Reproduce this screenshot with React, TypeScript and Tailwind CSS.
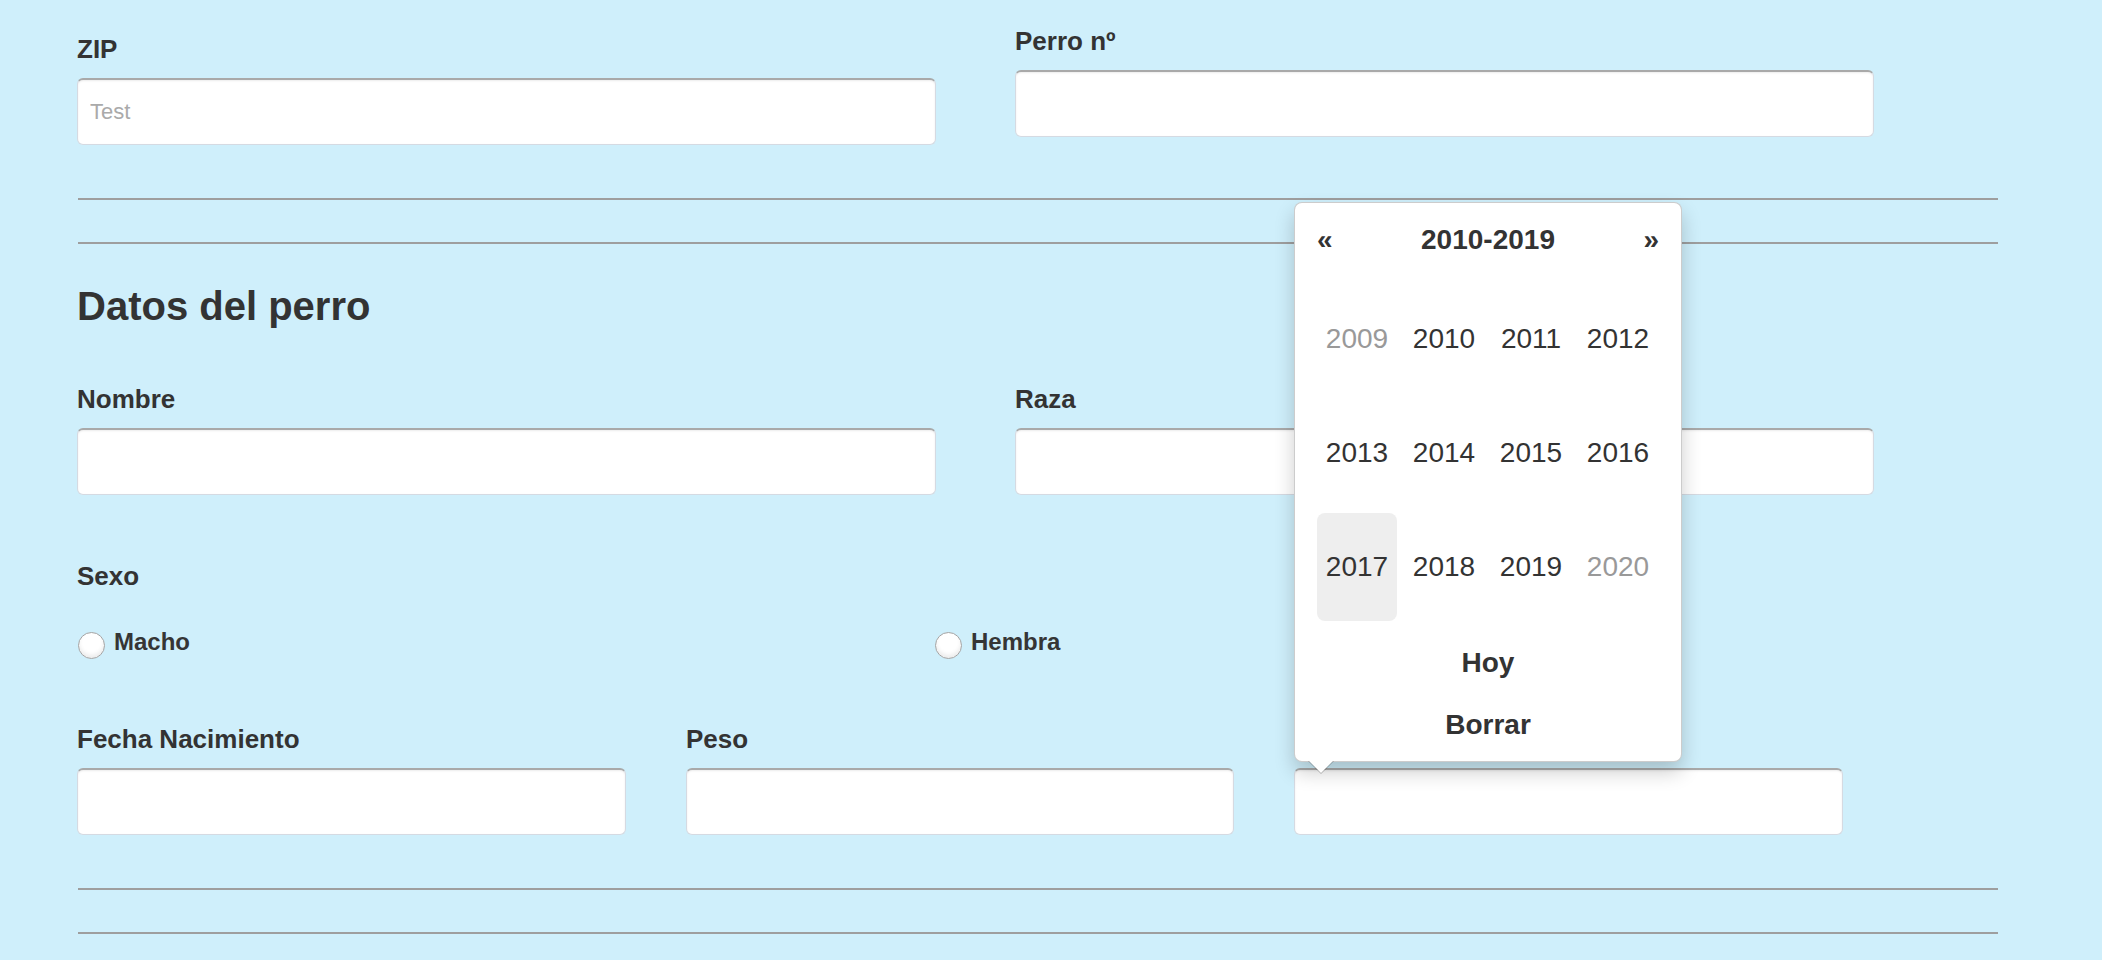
import React from "react";

const font = { fontFamily: '"Liberation Sans", Arial, Helvetica, sans-serif' };

function Label({ children }: { children: React.ReactNode }) {
  return <label className="block text-[26px] leading-[30px] font-bold text-[#333] mb-[14px]">{children}</label>;
}

function TextInput({ placeholder }: { placeholder?: string }) {
  return (
    <input
      type="text"
      placeholder={placeholder}
      className="block w-full h-[67px] box-border bg-white rounded-[6px] border border-[#d5dae2] border-t-2 border-t-[#a9a9a9] shadow-[inset_0_1px_2px_rgba(0,0,0,0.08)] px-[12px] text-[22px] text-[#555] placeholder:text-[#aaa] outline-none"
    />
  );
}

function Divider({ className }: { className: string }) {
  return <div className={`w-[1920px] h-[2px] bg-[#9e9e9e] ml-[1px] ${className}`} />;
}

function Radio({ label, name }: { label: string; name: string }) {
  return (
    <label className="flex items-start gap-[9px]">
      <input
        type="radio"
        name={name}
        className="appearance-none mt-[4px] ml-[1px] w-[27px] h-[27px] rounded-full border border-[#a3a3a3] bg-white shadow-[inset_0_-3px_4px_rgba(0,0,0,0.08)]"
      />
      <span className="text-[24px] leading-[28px] font-bold text-[#353535]">{label}</span>
    </label>
  );
}

const years = [
  { y: 2009, muted: true },
  { y: 2010 },
  { y: 2011 },
  { y: 2012 },
  { y: 2013 },
  { y: 2014 },
  { y: 2015 },
  { y: 2016 },
  { y: 2017, active: true },
  { y: 2018 },
  { y: 2019 },
  { y: 2020, muted: true },
];

function DecadePicker() {
  return (
    <div className="absolute left-0 bottom-[73px] z-10 w-[388px] box-border bg-white border border-[rgba(0,0,0,0.2)] rounded-[8px] shadow-[0_10px_20px_rgba(0,0,0,0.2)] px-[22px] pt-[17px] pb-[5px] text-[#333]">
      <div className="flex items-center h-[40px] text-[28px] leading-[40px] font-bold">
        <span className="w-[20px]">«</span>
        <span className="flex-1 text-center">2010-2019</span>
        <span className="w-[20px] text-right">»</span>
      </div>
      <div className="mt-[25px] grid grid-cols-[repeat(4,80px)] gap-x-[7px] gap-y-[6px]">
        {years.map((item) => (
          <span
            key={item.y}
            className={`h-[108px] leading-[108px] text-center text-[28px] rounded-[8px] ${
              item.active ? "bg-[#eeeeee]" : ""
            } ${item.muted ? "text-[#999]" : "text-[#333]"}`}
          >
            {item.y}
          </span>
        ))}
      </div>
      <div className="mt-[11px] h-[62px] leading-[62px] text-center text-[28px] font-bold">Hoy</div>
      <div className="h-[62px] leading-[62px] text-center text-[28px] font-bold">Borrar</div>
      {/* caret */}
      <div className="absolute top-full left-[13px] w-0 h-0 border-x-[13px] border-x-transparent border-t-[13px] border-t-[rgba(0,0,0,0.25)]" />
      <div className="absolute top-full left-[14px] w-0 h-0 border-x-[12px] border-x-transparent border-t-[12px] border-t-white" />
    </div>
  );
}

export default function App() {
  return (
    <div className="min-h-[960px] w-full bg-[#cfeffb] pl-[77px] overflow-hidden" style={font}>
      {/* Dirección */}
      <div className="grid grid-cols-[859px_859px] gap-x-[79px] items-start">
        <div className="mt-[34px]">
          <Label>ZIP</Label>
          <TextInput placeholder="Test" />
        </div>
        <div className="mt-[26px]">
          <Label>Perro nº</Label>
          <TextInput />
        </div>
      </div>

      <Divider className="mt-[53px]" />
      <Divider className="mt-[42px]" />

      {/* Datos del perro */}
      <h3 className="mt-[40px] text-[40px] leading-[44px] font-bold text-[#333]">Datos del perro</h3>

      <div className="mt-[56px] grid grid-cols-[859px_859px] gap-x-[79px]">
        <div>
          <Label>Nombre</Label>
          <TextInput />
        </div>
        <div>
          <Label>Raza</Label>
          <TextInput />
        </div>
      </div>

      <div className="mt-[66px] flex flex-col">
        <span className="text-[26px] leading-[30px] font-bold text-[#333]">Sexo</span>
      </div>
      <div className="mt-[37px] grid grid-cols-[857px_auto]">
        <Radio name="sexo" label="Macho" />
        <Radio name="sexo" label="Hembra" />
      </div>

      <div className="mt-[65px] grid grid-cols-[549px_548px_549px] gap-x-[60px]">
        <div>
          <Label>Fecha Nacimiento</Label>
          <TextInput />
        </div>
        <div>
          <Label>Peso</Label>
          <TextInput />
        </div>
        <div className="relative">
          <Label>Chip</Label>
          <TextInput />
          <DecadePicker />
        </div>
      </div>

      <Divider className="mt-[53px]" />
      <Divider className="mt-[42px]" />
    </div>
  );
}
